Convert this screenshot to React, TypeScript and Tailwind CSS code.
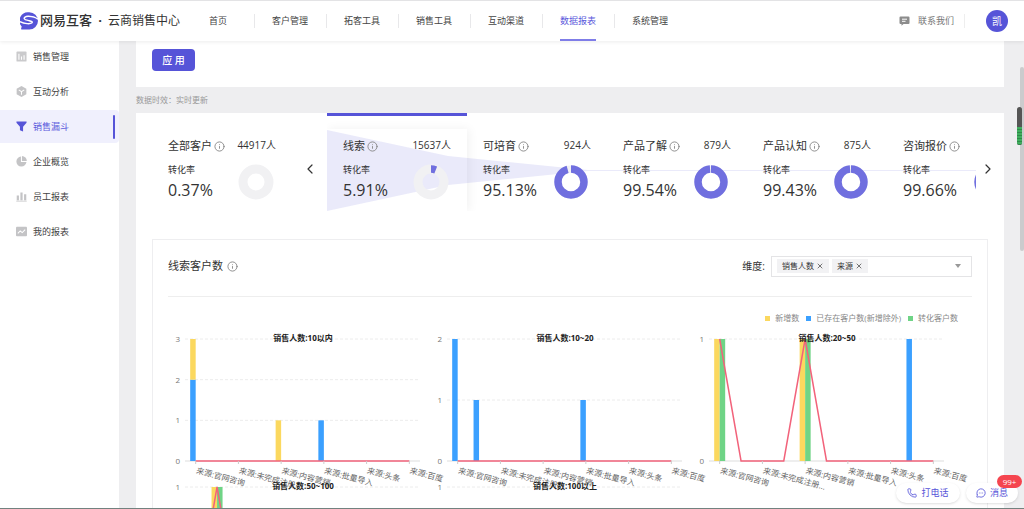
import { ChevronLeft, ChevronRight, Info, MessageCircleMore, Phone, X } from "lucide-react";

const navItems = ["首页", "客户管理", "拓客工具", "销售工具", "互动渠道", "数据报表", "系统管理"];

const sideItems = [
  { label: "销售管理", icon: "board" },
  { label: "互动分析", icon: "cube" },
  { label: "销售漏斗", icon: "funnel" },
  { label: "企业概览", icon: "pie" },
  { label: "员工报表", icon: "bars" },
  { label: "我的报表", icon: "trend" },
];

const stages: { name: string; count?: number; rate: number }[] = [
  { name: "线索", count: 15637, rate: 5.91 },
  { name: "可培育", count: 924, rate: 95.13 },
  { name: "产品了解", count: 879, rate: 99.54 },
  { name: "产品认知", count: 875, rate: 99.43 },
  { name: "咨询报价", rate: 99.66 },
];

const legend = [
  { label: "新增数", color: "bg-[#fbd85f]" },
  { label: "已存在客户数(新增除外)", color: "bg-[#3ba0ff]" },
  { label: "转化客户数", color: "bg-[#6fd486]" },
];

const sources = ["来源:官网咨询", "来源:未完成注册...", "来源:内容营销", "来源:批量导入", "来源:头条", "来源:百度"];

type Bar = { i: number; added?: number; exist?: number; converted?: number };

const charts: { title: string; max: number; bars: Bar[]; line: number[] }[] = [
  {
    title: "销售人数:10以内",
    max: 3,
    bars: [{ i: 0, exist: 2, added: 1 }, { i: 4, added: 1 }, { i: 6, exist: 1 }],
    line: [0, 0, 0, 0, 0, 0, 0, 0, 0, 0, 0],
  },
  {
    title: "销售人数:10~20",
    max: 2,
    bars: [{ i: 0, exist: 2 }, { i: 1, exist: 1 }, { i: 6, exist: 1 }],
    line: [0, 0, 0, 0, 0, 0, 0, 0, 0, 0, 0],
  },
  {
    title: "销售人数:20~50",
    max: 1,
    bars: [{ i: 0, added: 1, converted: 1 }, { i: 4, added: 1, converted: 1 }, { i: 9, exist: 1 }],
    line: [1, 0, 0, 0, 1, 0, 0, 0, 0, 0, 0],
  },
  {
    title: "销售人数:50~100",
    max: 1,
    bars: [{ i: 1, added: 1, converted: 1 }],
    line: [0, 1, 0, 0, 0, 0, 0, 0, 0, 0, 0],
  },
  {
    title: "销售人数:100以上",
    max: 1,
    bars: [],
    line: [0, 0, 0, 0, 0, 0, 0, 0, 0, 0, 0],
  },
];

function Logo() {
  return (
    <svg width="18" height="18" viewBox="0 0 18 18" aria-hidden="true">
      <path d="M9.300.3a8.600 8.600 0 0 1 0 17.300H1.600c-.5 0-.7-.4-.5-.8l.6-2.200A8.600 8.600 0 0 1 9.300.3z" fill="#5654d8" />
      <path
        d="M18 7.200C15.500 5.200 11.500 4.200 8 4.300 5.500 4.400 3.900 5.600 4.300 6.700c.5 1.300 3 1.500 5 2 2.400.6 3.500 1.300 2.700 2.100C10.500 12.200 4.500 12 0 9.600"
        fill="none"
        stroke="#fff"
        strokeWidth="1.400"
      />
    </svg>
  );
}

function SideIcon({ name }: { name: string }) {
  return (
    <svg width="11" height="11" viewBox="0 0 12 12" fill="currentColor" aria-hidden="true">
      {name === "board" && (
        <>
          <rect x="0.500" y="0.500" width="11" height="11" rx="1" opacity="0.900" />
          <path d="M3.200 3v6.500M6 6v3.500M8.800 4.500v5" stroke="#fff" strokeWidth="1.200" />
        </>
      )}
      {name === "cube" && (
        <>
          <path d="M6 0l5.300 3v6L6 12 .7 9V3z" />
          <path d="M3 4.300l3 1.800 3-1.800M6 6.100v3.400" fill="none" stroke="#fff" strokeWidth="1.100" />
        </>
      )}
      {name === "funnel" && <path d="M.5.5h11v1.300L7.700 6.200v5.300L4.300 10V6.200L.5 1.800z" />}
      {name === "pie" && (
        <>
          <path d="M5.400.6v6h6A5.500 5.500 0 1 1 5.400.6z" />
          <path d="M6.500.1A5.500 5.500 0 0 1 11.800 5.500H6.500z" />
        </>
      )}
      {name === "bars" && <path d="M.8 5h2.400v5H.8zM4.800 1.500h2.400V10H4.800zM8.800 3.500h2.400V10H8.800zM.3 10.500h11.400v1H.3z" />}
      {name === "trend" && (
        <>
          <rect x="0" y="0.800" width="12" height="10.400" rx="1" />
          <path d="M2 8l2.600-2.700L6.800 7.200 10 4" fill="none" stroke="#fff" strokeWidth="1.100" />
        </>
      )}
    </svg>
  );
}

function Donut({ rate, empty }: { rate: number; empty?: boolean }) {
  const circ = 2 * Math.PI * 13;
  const dash = (circ * rate) / 100;
  return (
    <svg width="36" height="36" viewBox="0 0 36 36" aria-hidden="true">
      <circle cx="18" cy="18" r="13" fill="none" stroke="#f1f1f3" strokeWidth={empty || rate < 50 ? 9 : 7} />
      {!empty && (
        <circle
          cx="18"
          cy="18"
          r="13"
          fill="none"
          stroke="#706fdf"
          strokeWidth="7.500"
          strokeDasharray={`${Math.min(dash, circ - 1.5)} ${circ}`}
          transform="rotate(-90 18 18)"
        />
      )}
    </svg>
  );
}

function Stage({ name, count, rate, empty }: { name: string; count?: number; rate: number; empty?: boolean }) {
  return (
    <div className="relative flex w-[140px] shrink-0 justify-between pl-4">
      <div>
        <h3 className="flex h-4 items-center gap-0.5 text-[11px] whitespace-nowrap">
          {name}
          <Info size={11} strokeWidth={2} className="shrink-0 text-[#888]" />
        </h3>
        <p className="mt-2 h-4 text-[9px] leading-4">转化率</p>
        <p className="mt-0.5 text-base leading-5">{rate}%</p>
      </div>
      <div className="flex flex-col items-end pr-4">
        <p className="h-3.5 text-[10px] leading-[14px] whitespace-nowrap">{count && `${count}人`}</p>
        <div className="mt-3 mr-0.5">
          <Donut rate={rate} empty={empty} />
        </div>
      </div>
    </div>
  );
}

const STEP = 235 / 11;

function Chart({ title, max, bars, line }: { title: string; max: number; bars: Bar[]; line: number[] }) {
  const x = (i: number) => 17 + STEP * (i + 0.5);
  const y = (v: number) => 129 - (122 * v) / max;
  const ticks = Array.from({ length: max + 1 }, (_, i) => i);
  return (
    <svg viewBox="0 0 262 148" className="w-full overflow-visible" role="img" aria-label={title}>
      {ticks.map((t) => (
        <g key={t}>
          <text x="12" y={y(t) + 3} fontSize="8" fill="#777" textAnchor="end">{t}</text>
          <path d={`M17 ${y(t)}H252`} stroke={t ? "#ececec" : "#ddd"} strokeDasharray={t ? "3 2" : undefined} />
        </g>
      ))}
      {bars.map((b) => {
        const exist = b.exist || 0;
        const added = b.added || 0;
        return (
          <g key={b.i}>
            <rect x={x(b.i) - 5.5} y={y(exist)} width="5.5" height={129 - y(exist)} fill="#3ba0ff" />
            <rect x={x(b.i) - 5.5} y={y(exist + added)} width="5.5" height={129 - y(added)} fill="#fbd85f" />
            <rect x={x(b.i)} y={y(b.converted || 0)} width="5.5" height={129 - y(b.converted || 0)} fill="#6fd486" />
          </g>
        );
      })}
      <polyline points={line.map((v, i) => `${x(i)},${y(v)}`).join(" ")} fill="none" stroke="#f2637b" strokeWidth="1.500" />
      {sources.map((s, i) => (
        <g key={s}>
          <path d={`M${x(i * 2)} 129v3`} stroke="#ccc" />
          <text fontSize="8" fill="#666" transform={`translate(${x(i * 2)} 141) rotate(15)`}>{s}</text>
        </g>
      ))}
      <text x="135" y="9" fontSize="8" fontWeight="bold" fill="#222" textAnchor="middle">{title}</text>
    </svg>
  );
}

function Header() {
  return (
    <header className="relative z-10 flex h-[41px] shrink-0 items-center border-t border-[#e3e3e5] bg-white shadow-[0_1px_4px_rgba(0,0,0,0.08)]">
      <div className="flex w-[182px] shrink-0 items-center gap-0.5 pl-5 whitespace-nowrap">
        <Logo />
        <span className="text-[13px] font-medium">网易互客</span>
        <span className="w-3 text-center text-[13px] font-bold">·</span>
        <span className="text-xs">云商销售中心</span>
      </div>
      <nav className="flex h-full items-center">
        {navItems.map((n, i) => (
          <div key={n} className="relative flex h-full w-[72px] items-center justify-center">
            {i > 0 && <span className="absolute left-0 h-3.5 w-px bg-[#e8e8ea]" />}
            <a
              href="#"
              className={
                n === "数据报表"
                  ? "flex h-full items-center border-y-2 border-t-transparent border-b-[#7f7de8] text-[9px] text-[#5b59dc]"
                  : "text-[9px] text-[#444]"
              }
            >
              {n}
            </a>
          </div>
        ))}
      </nav>
      <a href="#" className="ml-auto flex items-center gap-2 text-[9px] text-[#777]">
        <svg width="11" height="10" viewBox="0 0 11 10" aria-hidden="true">
          <path d="M1.500.5h8a1 1 0 0 1 1 1V7a1 1 0 0 1-1 1H4.500L2.500 9.800V8h-1a1 1 0 0 1-1-1V1.500a1 1 0 0 1 1-1z" fill="#8c8c8c" />
          <path d="M3 3.200h5M3 5.300h3.500" stroke="#fff" />
        </svg>
        联系我们
      </a>
      <span className="ml-2.5 h-3.5 w-px bg-[#eee]" />
      <button className="mr-4 ml-[21px] h-[22px] w-[22px] rounded-full bg-[#5654d8] text-[10px] text-white">凯</button>
    </header>
  );
}

function Sidebar() {
  return (
    <aside className="w-[119px] shrink-0 bg-white">
      <nav className="-mt-px flex flex-col gap-0.5">
        {sideItems.map((s) => {
          const active = s.icon === "funnel";
          return (
            <a
              key={s.icon}
              href="#"
              className={`flex h-[33px] items-center gap-1.5 rounded-r pl-4 text-[9px] ${active ? "bg-[#f0f0fd] text-[#5b59dc]" : "text-[#444]"}`}
            >
              <span className={active ? "text-[#5654d8]" : "text-[#c4c4c6]"}>
                <SideIcon name={s.icon} />
              </span>
              {s.label}
              {active && <span className="mr-1 ml-auto h-6 w-0.5 rounded bg-[#5654d8]" />}
            </a>
          );
        })}
      </nav>
    </aside>
  );
}

function Funnel() {
  return (
    <section className="flex h-[126px] items-start">
      <div className="pt-[25px]">
        <div className="pl-4">
          <Stage name="全部客户" count={44917} rate={0.37} empty />
        </div>
      </div>
      <button aria-label="上一页" className="flex h-28 w-[35px] shrink-0 items-center justify-center">
        <ChevronLeft size={16} strokeWidth={1.8} />
      </button>
      <div className="relative flex h-[98px] min-w-0 flex-1 overflow-hidden pt-[25px]">
        <div className="absolute top-0 left-0 h-[3px] w-[140px] bg-[#5654d8]" />
        <div className="absolute top-4 left-0 h-[82px] w-[140px] shadow-[2px_0_10px_rgba(0,0,0,0.06)]" />
        <svg className="absolute top-4 left-0" width="2000" height="82" aria-hidden="true">
          <path d="M0 1L121 27 261 41H2000V42H261L121 56 0 82z" fill="#5654d8" fillOpacity="0.120" />
        </svg>
        {stages.map((s) => (
          <Stage key={s.name} {...s} />
        ))}
      </div>
      <button aria-label="下一页" className="mr-1 flex h-28 w-6 shrink-0 items-center justify-center">
        <ChevronRight size={16} strokeWidth={1.8} />
      </button>
    </section>
  );
}

function DimensionPicker() {
  return (
    <div className="flex items-center gap-1.5 text-[9px]">
      <label htmlFor="dimension" className="text-[10px]">维度:</label>
      <div className="flex h-[21px] w-[201px] items-center gap-[3px] border border-[#e4e4e6] px-[5px]">
        {["销售人数", "来源"].map((t) => (
          <span key={t} className="flex h-3.5 shrink-0 items-center gap-0.5 bg-[#f2f2f4] px-[5px] text-[8px]">
            {t}
            <button aria-label={`移除${t}`}>
              <X size={8} />
            </button>
          </span>
        ))}
        <input id="dimension" role="combobox" aria-expanded={false} className="min-w-0 flex-1 outline-none" />
        <svg className="mr-1" width="8" height="6" viewBox="0 0 8 6" aria-hidden="true">
          <path d="M1 1h6L4 5z" fill="#999" />
        </svg>
      </div>
    </div>
  );
}

export default function App() {
  return (
    <div className="relative flex h-screen flex-col overflow-hidden bg-[#eeeef0] font-['Open_Sans','Noto_Sans_CJK_SC',sans-serif] text-[#333]">
      <Header />
      <div className="flex min-h-0 flex-1">
        <Sidebar />
        <main className="min-w-0 flex-1 overflow-hidden pr-5 pl-[17px]">
          <div className="h-[46px] bg-white px-4 pt-2">
            <button className="block h-[22px] w-[43px] rounded-sm bg-[#5654d8] text-[10px] font-medium text-white">应 用</button>
          </div>
          <p className="flex h-[26px] items-center text-[8px] text-[#999]">数据时效：实时更新</p>
          <div className="bg-white">
            <Funnel />
            <section className="mx-4 border border-[#eeeef0] px-[15px]">
              <div className="flex h-[57px] items-center justify-between border-b border-[#eee] pb-1">
                <h2 className="flex items-center gap-1 text-[11px]">
                  线索客户数
                  <Info size={11} strokeWidth={2} className="text-[#888]" />
                </h2>
                <DimensionPicker />
              </div>
              <ul className="flex justify-end gap-[7px] pt-[13px] pr-3.5 text-[8px] leading-4 text-[#888]">
                {legend.map((l) => (
                  <li key={l.label} className="flex items-center gap-[5px]">
                    <span className={`h-[5px] w-[5px] ${l.color}`} />
                    {l.label}
                  </li>
                ))}
              </ul>
              <div className="grid grid-cols-3 pt-1.5 pr-[18px]">
                {charts.map((c) => (
                  <Chart key={c.title} {...c} />
                ))}
              </div>
            </section>
          </div>
        </main>
      </div>

      {/* page scrollbar and level meter */}
      <div className="absolute top-[67px] right-0 h-[184px] w-1 rounded-full bg-[#cbcbcd]" />
      <div className="absolute top-[107px] right-0.5 flex h-[38px] w-[5px] flex-col justify-end overflow-hidden rounded-full bg-[#555]">
        <div className="h-[18px] bg-[repeating-linear-gradient(#3fae5e_0_2px,#2f8a49_2px_3px)]" />
      </div>

      <div className="absolute right-1.5 bottom-1.5 flex gap-1.5 text-[9px] text-[#5654d8]">
        <button className="flex h-5 w-16 items-center justify-center gap-1 rounded-full bg-white shadow">
          <Phone size={10} />
          打电话
        </button>
        <button className="relative flex h-5 w-[52px] items-center justify-center gap-1 rounded-full bg-white shadow">
          <MessageCircleMore size={10} />
          消息
          <span className="absolute -top-2 -right-1 flex h-[13px] w-[25px] items-center justify-center rounded-full bg-[#f5454f] text-[8px] text-white">99+</span>
        </button>
      </div>
      <div className="absolute bottom-0 h-px w-full bg-[#72827f]" />
    </div>
  );
}
